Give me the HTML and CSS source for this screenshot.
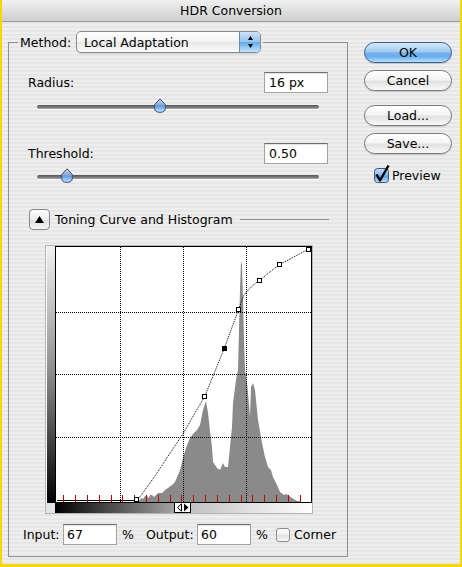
FILE: index.html
```html
<!DOCTYPE html>
<html>
<head>
<meta charset="utf-8">
<link rel="stylesheet" href="styles.css">
</head>
<body>
<div class="window">
  <div class="titlebar">HDR Conversion</div>
  <div class="content">
    <fieldset class="group">
      <legend class="legend">
        <div class="legend-inner">
          <span class="method-label">Method:</span>
          <div class="popup">
            <span class="popup-text">Local Adaptation</span>
            <span class="stepper">
              <svg width="5" height="13" viewBox="0 0 5 13"><path d="M2.5 0 L5 4 H0 Z" fill="#000"/><path d="M0 8 H5 L2.5 12 Z" fill="#000"/></svg>
            </span>
          </div>
        </div>
      </legend>
      <div class="group-body">
        <div class="field-row">
          <span>Radius:</span>
          <div class="textbox">16 px</div>
        </div>
        <div class="slider">
          <div class="track"></div>
          <svg class="thumb" style="left:117px" width="12" height="15" viewBox="0 0 12 15"><defs><linearGradient id="tg" x1="0" y1="0" x2="0" y2="1"><stop offset="0" stop-color="#d2d8ec"/><stop offset=".45" stop-color="#8fa6d4"/><stop offset=".55" stop-color="#5c9fe6"/><stop offset="1" stop-color="#c8e8ff"/></linearGradient></defs><path d="M6 .8 L11.3 6.5 V10.5 Q11.3 14.3 6 14.3 Q.7 14.3 .7 10.5 V6.5 Z" fill="url(#tg)" stroke="#3d4f70" stroke-width="1"/></svg>
        </div>
        <div class="field-row second">
          <span>Threshold:</span>
          <div class="textbox">0.50</div>
        </div>
        <div class="slider second">
          <div class="track"></div>
          <svg class="thumb" style="left:24px" width="12" height="15" viewBox="0 0 12 15"><path d="M6 .8 L11.3 6.5 V10.5 Q11.3 14.3 6 14.3 Q.7 14.3 .7 10.5 V6.5 Z" fill="url(#tg)" stroke="#3d4f70" stroke-width="1"/></svg>
        </div>
        <div class="section-head">
          <div class="disclosure"><svg width="9" height="7" viewBox="0 0 9 7"><path d="M4.5 0 L9 7 H0 Z" fill="#000"/></svg></div>
          <span class="section-title">Toning Curve and Histogram</span>
          <span class="rule"></span>
        </div>
        <div class="graph">
          <div class="vbar"></div>
          <div class="plot">
            <svg width="257" height="257" viewBox="0 0 257 257">
              <rect x=".5" y=".5" width="256" height="256" fill="#fff" stroke="#000"/>
              <polygon fill="#8a8a8a" points="82,256 83,255 85,254 86,252 88,253 90,250 92,250 94,252 95,249 97,249 99,251 100,250 103,247 107,247 110,244 113,242 117,239 120,236 123,229 125,224 128,212 131,202 135,192 138,188 142,184 145,179 148,164 151,155 153,167 155,185 157,201 158,216 162,222 165,224 168,217 170,221 173,221 175,201 177,181 178,157 181,134 183,124 184,84 185,44 186,15 187,19 188,54 189,94 190,124 192,137 193,147 195,171 196,141 198,137 200,144 203,174 207,197 210,211 213,221 216,224 218,231 222,239 225,246 229,249 231,248 233,249 237,252 242,255 245,255 245,256"/>
              <g stroke="#000" stroke-dasharray="1 1" fill="none">
                <line x1="65.5" y1="1" x2="65.5" y2="256"/>
                <line x1="128.5" y1="1" x2="128.5" y2="256"/>
                <line x1="191.5" y1="1" x2="191.5" y2="256"/>
                <line x1="1" y1="66.5" x2="256" y2="66.5"/>
                <line x1="1" y1="128.5" x2="256" y2="128.5"/>
                <line x1="1" y1="191.5" x2="256" y2="191.5"/>
              </g>
              <line x1="2" y1="254.5" x2="82" y2="254.5" stroke="#000"/>
              <g stroke="#c00000">
                <line x1="8.5" y1="249" x2="8.5" y2="256"/>
                <line x1="20.5" y1="249" x2="20.5" y2="256"/>
                <line x1="32.5" y1="249" x2="32.5" y2="256"/>
                <line x1="44.5" y1="249" x2="44.5" y2="256"/>
                <line x1="56.5" y1="249" x2="56.5" y2="256"/>
                <line x1="67.5" y1="249" x2="67.5" y2="256"/>
                <line x1="79.5" y1="249" x2="79.5" y2="256"/>
                <line x1="91.5" y1="249" x2="91.5" y2="256"/>
                <line x1="103.5" y1="249" x2="103.5" y2="256"/>
                <line x1="115.5" y1="249" x2="115.5" y2="256"/>
                <line x1="126.5" y1="249" x2="126.5" y2="256"/>
                <line x1="138.5" y1="249" x2="138.5" y2="256"/>
                <line x1="150.5" y1="249" x2="150.5" y2="256"/>
                <line x1="162.5" y1="249" x2="162.5" y2="256"/>
                <line x1="174.5" y1="249" x2="174.5" y2="256"/>
                <line x1="186.5" y1="249" x2="186.5" y2="256"/>
                <line x1="197.5" y1="249" x2="197.5" y2="256"/>
                <line x1="209.5" y1="249" x2="209.5" y2="256"/>
                <line x1="221.5" y1="249" x2="221.5" y2="256"/>
                <line x1="233.5" y1="249" x2="233.5" y2="256"/>
                <line x1="245.5" y1="249" x2="245.5" y2="256"/>
              </g>
              <polyline fill="none" stroke="#000" stroke-dasharray="1 1" points="82,254 85,250.7 100,230 115,207.3 128.3,187.3 141.7,164 149.5,151 169.3,102.3 183.5,63.7 189,49 193.3,44 198.3,39 204.2,34.5 224.5,18.5 253.3,3.3"/>
              <g fill="#fff" stroke="#000">
                <rect x="79.5" y="251.5" width="4" height="4"/>
                <rect x="147.5" y="148.5" width="4" height="4"/>
                <rect x="181.5" y="61.5" width="4" height="4"/>
                <rect x="202.5" y="32.5" width="4" height="4"/>
                <rect x="222.5" y="16.5" width="4" height="4"/>
                <rect x="251.5" y="1.5" width="4" height="4"/>
              </g>
              <rect x="167" y="100" width="5" height="5" fill="#000"/>
            </svg>
          </div>
          <div class="corner"></div>
          <div class="hbar">
            <svg class="hbar-handle" width="17" height="11" viewBox="0 0 17 11"><rect x=".5" y=".5" width="16" height="10" fill="#fff" stroke="#000"/><path d="M7.5 1.8 L3.5 5.5 L7.5 9.2 Z" fill="none" stroke="#000"/><path d="M10 1.5 L14.5 5.5 L10 9.5 Z" fill="#000"/></svg>
          </div>
        </div>
        <div class="io-row">
          <span class="io-in">Input:</span>
          <div class="textbox small">67</div>
          <span class="pct">%</span>
          <span class="io-out">Output:</span>
          <div class="textbox small">60</div>
          <span class="pct pct2">%</span>
          <span class="check-plain"></span>
          <span class="corner-label">Corner</span>
        </div>
      </div>
    </fieldset>
    <div class="buttons">
      <div class="btn default">OK</div>
      <div class="btn gap-s">Cancel</div>
      <div class="btn gap-l">Load...</div>
      <div class="btn gap-s">Save...</div>
      <div class="preview">
        <svg class="check-blue" width="15" height="15" viewBox="0 0 15 15"><defs><linearGradient id="cg" x1="0" y1="0" x2="0" y2="1"><stop offset="0" stop-color="#c9def5"/><stop offset=".45" stop-color="#86b8ec"/><stop offset=".55" stop-color="#5aa2ea"/><stop offset="1" stop-color="#bfe4ff"/></linearGradient></defs><rect x=".5" y=".5" width="14" height="14" rx="3" fill="url(#cg)" stroke="#3a5580"/><path d="M2.5 6.5 L6 12.5 L14.5 -2.5" fill="none" stroke="#000" stroke-width="2.4" stroke-linejoin="round"/></svg>
        <span>Preview</span>
      </div>
    </div>
  </div>
</div>
</body>
</html>
```

FILE: styles.css
```css
html, body {
  margin: 0;
  padding: 0;
}
body {
  font-family: "DejaVu Sans", "Noto Sans", sans-serif;
  font-size: 12.5px;
  color: #000;
}
.window {
  width: 462px;
  height: 567px;
  box-sizing: border-box;
  border: 2px solid #f4d800;
  border-top: 0;
  border-bottom-width: 3px;
  background: repeating-linear-gradient(to bottom, #eeeeee 0 2px, #e6e6e6 2px 4px);
  display: flex;
  flex-direction: column;
}
.titlebar {
  height: 21px;
  border-bottom: 1px solid #9a9a9a;
  background: linear-gradient(#f0f0f0, #cfcfcf);
  display: flex;
  align-items: center;
  justify-content: center;
}
.content {
  display: flex;
  align-items: flex-start;
  padding: 9px 0 0 6px;
}
.group {
  margin: 0;
  padding: 0;
  border: 1px solid #8f8f8f;
  width: 340px;
  min-width: 0;
  box-sizing: border-box;
}
.legend {
  margin-left: 9px;
  padding: 0 2px;
}
.legend-inner {
  display: flex;
  align-items: center;
  height: 22px;
}
.method-label {
  width: 56px;
}
.popup {
  width: 185px;
  height: 22px;
  box-sizing: border-box;
  border: 1px solid #8a8a8a;
  border-radius: 5px;
  background: linear-gradient(#ffffff, #f4f4f4 50%, #e8e8e8 51%, #fbfbfb);
  display: flex;
  align-items: center;
  overflow: hidden;
  box-shadow: 0 1px 1px rgba(0, 0, 0, 0.12);
}
.popup-text {
  flex: 1;
  padding-left: 7px;
}
.stepper {
  width: 20px;
  align-self: stretch;
  background: linear-gradient(#cfe3f8, #93c3f0 50%, #62a9ec 51%, #bfe6ff);
  border-left: 1px solid #6b8bb5;
  display: flex;
  align-items: center;
  justify-content: center;
}
.group-body {
  display: flex;
  flex-direction: column;
  padding: 19px 19px 11px 14px;
}
.field-row {
  display: flex;
  align-items: center;
  justify-content: space-between;
  margin-left: 5px;
  height: 21px;
}
.field-row.second {
  margin-top: 30px;
}
.textbox {
  width: 64px;
  height: 21px;
  box-sizing: border-box;
  border: 1px solid #a2a2a2;
  border-top-color: #707070;
  background: #fff;
  padding: 0 4px;
  display: flex;
  align-items: center;
  box-shadow: inset 0 1px 1px rgba(0, 0, 0, 0.12);
}
.textbox.small {
  width: 54px;
  padding-left: 3px;
}
.slider {
  position: relative;
  height: 15px;
  margin: 5px 9px 0 14px;
}
.slider.second {
  margin-top: 4px;
}
.track {
  margin-top: 7px;
  height: 4px;
  border-radius: 2px;
  background: linear-gradient(#555555, #7d7d7d 60%, #a9a9a9);
  box-shadow: 0 1px 0 rgba(255, 255, 255, 0.8);
}
.thumb {
  position: absolute;
  top: 0;
}
.section-head {
  display: flex;
  align-items: center;
  height: 22px;
  margin: 25px 0 0 6px;
}
.disclosure {
  width: 21px;
  height: 21px;
  box-sizing: border-box;
  border: 1px solid #888;
  border-radius: 4px;
  background: linear-gradient(#fdfdfd, #ececec 50%, #dedede 51%, #f6f6f6);
  display: flex;
  align-items: center;
  justify-content: center;
  margin-right: 5px;
}
.rule {
  flex: 1;
  height: 1px;
  background: #8f8f8f;
  margin-left: 7px;
  margin-right: -1px;
}
.graph {
  margin: 15px 0 0 22px;
  width: 268px;
  box-sizing: border-box;
  border: 1px solid #b4b4b4;
  display: grid;
  grid-template-columns: 9px 257px;
  grid-template-rows: 257px 10px;
}
.vbar {
  background: linear-gradient(#f2f2f2, #8a8a8a 50%, #000);
  box-shadow: inset 1px 0 0 #fafafa;
}
.plot svg {
  display: block;
}
.corner {
  background: #e4e4e4;
}
.hbar {
  position: relative;
  background: linear-gradient(to right, #000, #9a9a9a 44%, #c2c2c2 53%, #ffffff);
}
.hbar-handle {
  position: absolute;
  left: 119px;
  top: -1px;
}
.io-row {
  display: flex;
  align-items: center;
  height: 21px;
  margin-top: 10px;
}
.io-row > * {
  flex-shrink: 0;
}
.io-in {
  width: 40px;
}
.pct {
  width: 24px;
  padding-left: 5px;
}
.pct2 {
  width: 20px;
}
.io-out {
  width: 51px;
}
.check-plain {
  width: 14px;
  height: 14px;
  box-sizing: border-box;
  border: 1px solid #8c8c8c;
  border-radius: 3px;
  background: linear-gradient(#ffffff, #efefef 50%, #e0e0e0 51%, #f8f8f8);
  margin-right: 4px;
}
.buttons {
  display: flex;
  flex-direction: column;
  width: 88px;
  margin-left: 16px;
  padding-top: 11px;
}
.btn {
  height: 21px;
  box-sizing: border-box;
  border: 1px solid #7a7a7a;
  border-radius: 11px;
  background: linear-gradient(#ffffff, #f4f4f4 45%, #e2e2e2 55%, #f8f8f8);
  display: flex;
  align-items: center;
  justify-content: center;
  box-shadow: 0 1px 1px rgba(0, 0, 0, 0.15);
}
.btn.default {
  border-color: #3f5f91;
  background: linear-gradient(#d6e9fb, #a4cbf2 45%, #74b2ee 52%, #69adee 70%, #b2e0ff);
}
.btn.gap-s {
  margin-top: 7px;
}
.btn.gap-l {
  margin-top: 14px;
}
.preview {
  display: flex;
  align-items: center;
  margin: 14px 0 0 10px;
}
.check-blue {
  overflow: visible;
  margin-right: 3px;
}
```
